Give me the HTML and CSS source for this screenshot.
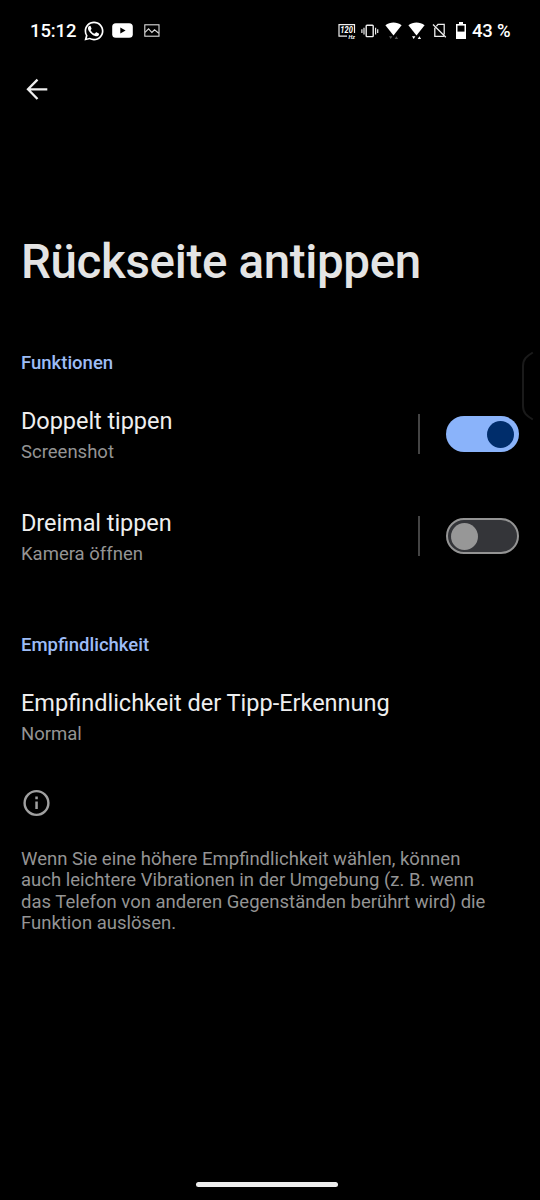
FILE: index.html
```html
<!DOCTYPE html>
<html lang="de">
<head>
<meta charset="utf-8">
<title>Rückseite antippen</title>
<link rel="stylesheet" href="styles.css">
</head>
<body>
<div class="screen">
  <header class="status">
    <div class="status-left">
      <span class="clock">15:12</span>
      <svg class="whatsapp" width="20" height="20" viewBox="0 0 24 24" fill="#fff"><path d="M12 .6C5.700.6.700 5.600.700 11.900c0 2 .5 3.900 1.500 5.600L.6 23.500l6.100-1.600c1.600.9 3.400 1.400 5.300 1.400 6.300 0 11.400-5.100 11.400-11.400S18.300.6 12 .6zm0 20.800c-1.800 0-3.500-.5-5-1.400l-3.600.9.9-3.500c-1-1.500-1.600-3.500-1.600-5.500 0-5.100 4.200-9.300 9.300-9.300s9.400 4.200 9.400 9.300-4.200 9.500-9.400 9.500z"/><path d="M8 6.200c-.3-.6-.5-.6-.9-.6-.5 0-.9.2-1.300.7-.5.500-1 1.300-1 2.600 0 1.500 1.100 3 1.300 3.300 1 1.600 3.800 4.800 7.300 5.800 2 .7 4-.3 4.400-1.300.3-.7.300-1.400.2-1.500-.1-.3-.4-.4-.8-.6l-2.200-1.100c-.3-.1-.6-.1-.8.2l-1.100 1.300c-.2.2-.5.3-.8.1-1.800-.8-3.100-1.800-4.200-3.800-.2-.3 0-.5.2-.8.6-.7.9-1.100.7-1.600z"/></svg>
      <svg class="youtube" width="21" height="15" viewBox="0 0 21 15"><rect x=".2" y=".2" width="20.600" height="14.600" rx="3.600" fill="#fff"/><path d="M8.300 4.400v6.200l5.300-3.100z" fill="#000"/></svg>
      <svg class="picture" width="16" height="13" viewBox="0 0 16 13" fill="none" stroke="#ddd" stroke-width="1.100"><rect x=".8" y=".8" width="14.200" height="11.400"/><path d="M1 8.300l3.600-3.500 3.300 3.700 2.600-2.700 4.300 3.500"/></svg>
    </div>
    <div class="status-right">
      <svg class="rate" width="18" height="19" viewBox="0 0 18 19"><path d="M9 13.200H1V1.700h15.500v8.200" fill="none" stroke="#eee" stroke-width="1.200"/><text x="2.300" y="10.300" textLength="12.600" lengthAdjust="spacingAndGlyphs" class="rate-number">120</text><text x="10.600" y="16.400" class="rate-unit">Hz</text></svg>
      <svg class="vibrate" width="18" height="14" viewBox="0 0 18 14" fill="none" stroke="#eee"><rect x="5.200" y="1.200" width="7" height="11.400" rx=".8" stroke-width="1.400"/><path d="M3 3.800v6.800M14.600 3.800v6.800M.9 5.300v3.800M16.700 5.300v3.800" stroke-width="1.200"/></svg>
      <svg class="wifi" width="17" height="18" viewBox="0 0 17 18"><path d="M.4 3.200C5-.4 12-.4 16.600 3.200L8.500 13.600z" fill="#fff"/><path d="M4 14.200h3.400l-1.700 2.700zM9.700 16.900h3.400l-1.700-2.700z" fill="#555"/></svg>
      <svg class="wifi" width="17" height="18" viewBox="0 0 17 18"><path d="M.4 3.200C5-.4 12-.4 16.600 3.200L8.500 13.600z" fill="#fff"/><path d="M4 14.200h3.400l-1.700 2.700zM9.700 16.900h3.400l-1.700-2.700z" fill="#fff"/></svg>
      <svg class="sim" width="15" height="15" viewBox="0 0 15 15" fill="none" stroke="#eee" stroke-width="1.300"><path d="M4.400 3.200L6 1.400h6.200v10M2.800 4.700v8.600h9.100M1 1.500l12.800 12.700"/></svg>
      <svg class="battery" width="10" height="17" viewBox="0 0 10 17"><path d="M3 0h4v2H10v15H0V2h3z" fill="#fff"/><path d="M1.500 3.600h7v6h-7z" fill="#000"/></svg>
      <span class="percent">43 %</span>
    </div>
  </header>
  <nav class="toolbar">
    <svg width="24" height="24" viewBox="0 0 24 24" fill="none" stroke="#eee" stroke-width="2.300"><path d="M22.300 12.300H3.500M12.500 2.600L3 12.300l9.500 9.700"/></svg>
  </nav>
  <h1 class="title">Rückseite antippen</h1>
  <main>
    <h2 class="section">Funktionen</h2>
    <div class="row">
      <div class="labels"><div class="name">Doppelt tippen</div><div class="detail">Screenshot</div></div>
      <div class="divider"></div>
      <div class="switch on"><div class="knob"></div></div>
    </div>
    <div class="row">
      <div class="labels"><div class="name">Dreimal tippen</div><div class="detail">Kamera öffnen</div></div>
      <div class="divider"></div>
      <div class="switch"><div class="knob"></div></div>
    </div>
    <h2 class="section second">Empfindlichkeit</h2>
    <div class="row">
      <div class="labels"><div class="name wide">Empfindlichkeit der Tipp-Erkennung</div><div class="detail">Normal</div></div>
    </div>
    <svg class="info" width="28" height="28" viewBox="0 0 28 28"><circle cx="13.500" cy="14" r="11.900" fill="none" stroke="#a0a0a0" stroke-width="2.400"/><path d="M12.300 7.600h2.500v2.600h-2.500zM12.300 12.400h2.500v7.600h-2.500z" fill="#a0a0a0"/></svg>
    <p class="note">Wenn Sie eine höhere Empfindlichkeit wählen, können<br>auch leichtere Vibrationen in der Umgebung (z. B. wenn<br>das Telefon von anderen Gegenständen berührt wird) die<br>Funktion auslösen.</p>
  </main>
  <svg class="edge-handle" width="14" height="70" viewBox="0 0 14 70" fill="none" stroke="#1a1a1a" stroke-width="2"><path d="M12.800 1.500C7 5 3 8 3 15v40c0 7 4 10 9.800 13.500"/></svg>
  <div class="home-bar"></div>
</div>
</body>
</html>
```
FILE: styles.css
```css
* { box-sizing: border-box; }
body { margin: 0; background: #000; font-family: Roboto, sans-serif; }
.screen {
  position: relative;
  display: flex;
  flex-direction: column;
  width: 540px;
  height: 1200px;
  overflow: hidden;
  background: #000;
  color: #eee;
}
.status {
  display: flex;
  justify-content: space-between;
  height: 61px;
  padding: 0 29px 0 30px;
  color: #fff;
  font-size: 18.500px;
  font-weight: 500;
}
.status-left, .status-right { display: flex; align-items: center; }
.status svg { flex: none; }
.clock { width: 53.500px; white-space: nowrap; letter-spacing: -.1px; }
.youtube { margin-left: 8px; }
.picture { margin-left: 11px; }
.rate { margin-top: 3px; }
.rate-number { font: italic 700 8.500px Roboto, sans-serif; fill: #fff; }
.rate-unit { font: italic 700 5.500px Roboto, sans-serif; fill: #fff; }
.vibrate { margin-left: 5px; }
.wifi { margin-left: 6px; }
.sim { margin-left: 7px; }
.battery { margin-left: 9px; }
.percent { width: 39px; margin-left: 6px; white-space: nowrap; letter-spacing: -.2px; }
.toolbar { height: 57px; padding: 16px 0 0 25px; }
.toolbar svg { display: block; }
.title {
  height: 202px;
  margin: 0;
  padding: 114px 0 0 21px;
  font-size: 47.500px;
  line-height: 60px;
  font-weight: 500;
  letter-spacing: -.35px;
  color: #e4e4e4;
  white-space: nowrap;
}
main { padding: 31px 21px 0; }
.section {
  height: 24px;
  margin: 0;
  font-size: 18.500px;
  line-height: 24px;
  font-weight: 500;
  color: #9dbcf6;
}
.row {
  display: flex;
  align-items: center;
  height: 102px;
  padding-top: 16px;
}
.labels { flex: 1; height: 62px; padding-top: 2px; }
.name { font-size: 23.500px; line-height: 32px; letter-spacing: -.06px; white-space: nowrap; }
.name.wide { letter-spacing: 0; }
.detail { font-size: 18.500px; line-height: 30px; color: #949494; white-space: nowrap; }
.divider { width: 1.500px; height: 40px; margin-right: 26.500px; background: #444; }
.switch {
  display: flex;
  align-items: center;
  width: 73px;
  height: 36.500px;
  padding-left: 3px;
  border: 2px solid #949494;
  border-radius: 19px;
  background: #343539;
}
.knob { width: 27px; height: 27px; border-radius: 50%; background: #979797; }
.switch.on { justify-content: flex-end; padding: 0 5px 0 0; border: 0; background: #8ab3fa; }
.switch.on .knob { background: #002d6b; }
.second { margin-top: 54px; }
.info { display: block; margin: 29.500px 0 0 2px; }
.note { margin: 32px 0 0; font-size: 18.500px; line-height: 21.500px; color: #949494; white-space: nowrap; }
.edge-handle { position: absolute; left: 520px; top: 351px; }
.home-bar { width: 142px; height: 5px; margin: auto 0 13.500px 196px; border-radius: 3px; background: #eee; }
```
